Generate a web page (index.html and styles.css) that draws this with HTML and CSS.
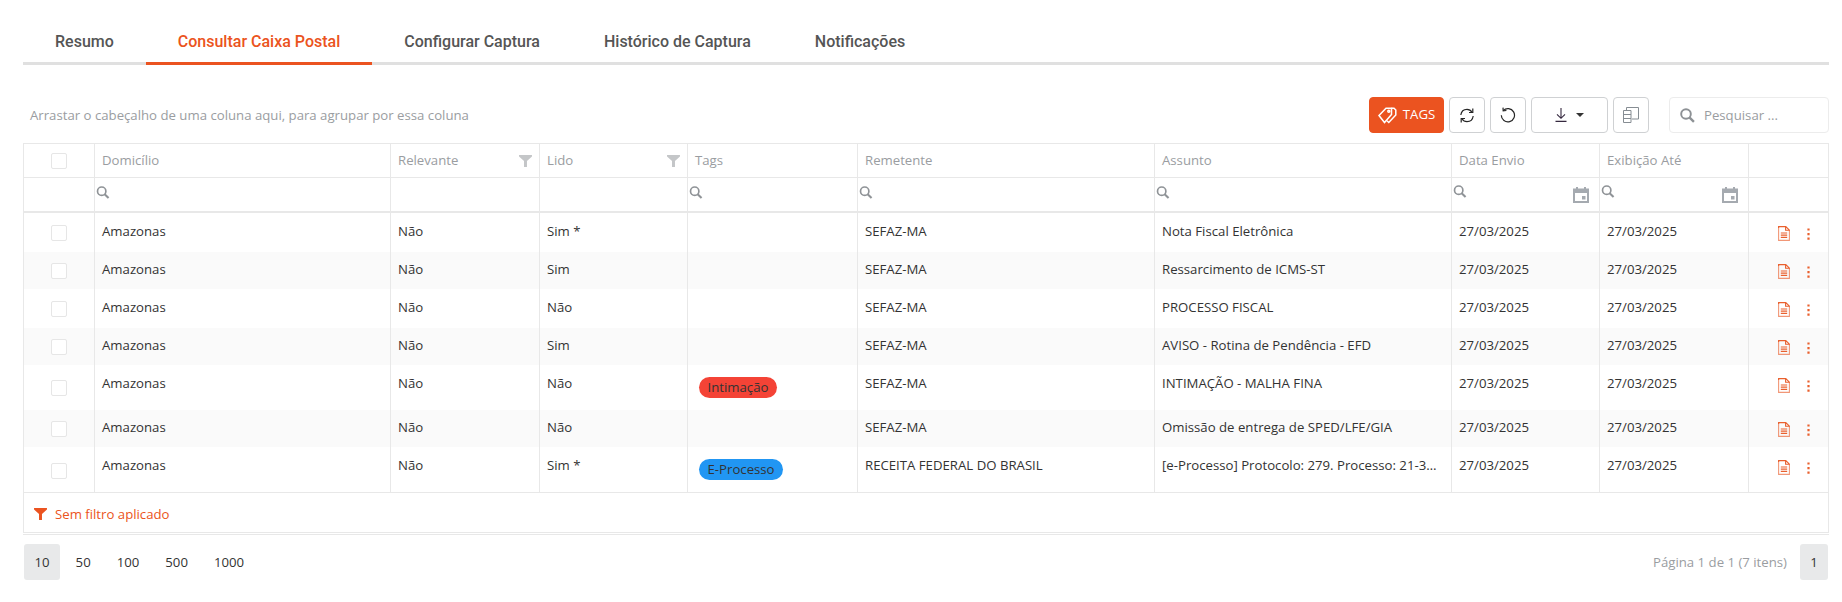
FILE: index.html
```html
<!DOCTYPE html>
<html lang="pt-BR">
<head>
<meta charset="utf-8">
<title>Consultar Caixa Postal</title>
<link rel="stylesheet" href="styles.css">
</head>
<body>
<svg width="0" height="0" class="defs">
  <symbol id="i-search" viewBox="0 0 14 14"><circle cx="5.600" cy="5.600" r="4.500" fill="none" stroke="currentColor" stroke-width="1.800"/><path d="M8.800 8.800l4.200 4.200" stroke="currentColor" stroke-width="2.200" fill="none"/></symbol>
  <symbol id="i-funnel" viewBox="0 0 14 13"><path d="M0 0h14v1.500L8.600 6.600V13H5.400V6.600L0 1.500z" fill="currentColor"/></symbol>
  <symbol id="i-cal" viewBox="0 0 16 16"><path fill-rule="evenodd" d="M3 0h2v1.500h6V0h2v1.500h3V16H0V1.500h3zM2 6v8h12V6zM9 9h3.500v3.500H9z" fill="currentColor"/></symbol>
  <symbol id="i-doc" viewBox="0 0 12 15"><path d="M11.400 4.200v10.200H.6V.6" fill="none" stroke="currentColor" stroke-width="1.100" opacity=".65"/><path d="M.6 2V.6h7.200l3.600 3.600H7.600V.6" fill="none" stroke="currentColor" stroke-width="1.100"/><path d="M2.800 7h6.400M2.800 9.200h6.400M2.800 11.400h6.400" stroke="currentColor" stroke-width="1.200"/></symbol>
  <symbol id="i-dots" viewBox="0 0 3 13"><path d="M.4 .4h2.200v2.200H.4zM.4 5h2.200v2.200H.4zM.4 9.600h2.200v2.200H.4z" fill="currentColor"/></symbol>
</svg>
<main class="page">
  <nav class="tabs">
    <a class="tab">Resumo</a>
    <a class="tab active">Consultar Caixa Postal</a>
    <a class="tab">Configurar Captura</a>
    <a class="tab">Histórico de Captura</a>
    <a class="tab">Notificações</a>
  </nav>

  <div class="toolbar">
    <span class="hint">Arrastar o cabeçalho de uma coluna aqui, para agrupar por essa coluna</span>
    <button class="btn btn-tags">
      <svg width="19" height="17" viewBox="0 0 19 17" fill="none" stroke="currentColor" stroke-width="1.500"><path d="M1 8.500L8 1.200h5.500v6.300L6.500 15.500z"/><path d="M13.500 1.200h2.500l1.800 1.800v5l-7 7.500-1.800-1.800"/><circle cx="10.800" cy="4.200" r="1"/></svg>
      <span class="tags-label">TAGS</span>
    </button>
    <button class="btn btn-icon">
      <svg width="14" height="15" viewBox="0 0 14 15" fill="none" stroke="#262626" stroke-width="1.200"><path d="M.8 7C1.300 3.500 3.800 1.300 7 1.300c2.200 0 3.900 1 5 2.900"/><path d="M12.800.6v3.900H9"/><path d="M13.200 8c-.5 3.500-3 5.700-6.200 5.700-2.200 0-3.900-1-5-2.900"/><path d="M1.200 14.400v-3.900H5"/></svg>
    </button>
    <button class="btn btn-icon">
      <svg width="16" height="16" viewBox="0 0 16 16" fill="none" stroke="#262626" stroke-width="1.200"><path d="M3.200 3.600A6.600 6.600 0 1 1 1.300 8.300"/><path d="M3 .6l.2 3.200 3.200-.3"/></svg>
    </button>
    <button class="btn btn-export">
      <svg width="12" height="14" viewBox="0 0 12 14" fill="none" stroke="#35283f" stroke-width="1.100"><path d="M6 0v10M2 6.300L6 10.300l4-4M.5 13.400h11"/></svg>
      <span class="caret"></span>
    </button>
    <button class="btn btn-icon btn-cols">
      <svg width="16" height="16" viewBox="0 0 16 16" fill="none" stroke="#868d93" stroke-width="1"><path d="M.5 3.500h7.500v12H.5zM.5 7.500h7.500M.5 11.500h7.500"/><path d="M3.500 3.500V.5h12v11.500H9"/></svg>
    </button>
    <label class="search">
      <svg class="search-icon"><use href="#i-search"/></svg>
      <span class="search-ph">Pesquisar ...</span>
    </label>
  </div>

  <section class="grid">
    <table class="data">
      <colgroup>
        <col class="c-check"><col class="c-dom"><col class="c-rel"><col class="c-lido"><col class="c-tags"><col class="c-rem"><col class="c-ass"><col class="c-date"><col class="c-date2"><col class="c-act">
      </colgroup>
      <thead>
        <tr class="head">
          <th class="center"><span class="check"></span></th>
          <th>Domicílio</th>
          <th><div class="th-flex">Relevante<svg class="funnel"><use href="#i-funnel"/></svg></div></th>
          <th><div class="th-flex">Lido<svg class="funnel"><use href="#i-funnel"/></svg></div></th>
          <th>Tags</th>
          <th>Remetente</th>
          <th>Assunto</th>
          <th>Data Envio</th>
          <th>Exibição Até</th>
          <th></th>
        </tr>
        <tr class="filters">
          <td></td>
          <td><svg class="f-search"><use href="#i-search"/></svg></td>
          <td></td>
          <td></td>
          <td><svg class="f-search"><use href="#i-search"/></svg></td>
          <td><svg class="f-search"><use href="#i-search"/></svg></td>
          <td><svg class="f-search"><use href="#i-search"/></svg></td>
          <td class="date-filter"><div class="f-date"><svg class="f-search"><use href="#i-search"/></svg><svg class="f-cal"><use href="#i-cal"/></svg></div></td>
          <td class="date-filter"><div class="f-date"><svg class="f-search"><use href="#i-search"/></svg><svg class="f-cal"><use href="#i-cal"/></svg></div></td>
          <td></td>
        </tr>
      </thead>
      <tbody>
        <tr class="r-b">
          <td class="center"><span class="check"></span></td><td>Amazonas</td><td>Não</td><td>Sim *</td><td></td><td>SEFAZ-MA</td><td>Nota Fiscal Eletrônica</td><td>27/03/2025</td><td>27/03/2025</td>
          <td><div class="acts"><svg class="doc"><use href="#i-doc"/></svg><svg class="dots"><use href="#i-dots"/></svg></div></td>
        </tr>
        <tr class="r-b alt">
          <td class="center"><span class="check"></span></td><td>Amazonas</td><td>Não</td><td>Sim</td><td></td><td>SEFAZ-MA</td><td>Ressarcimento de ICMS-ST</td><td>27/03/2025</td><td>27/03/2025</td>
          <td><div class="acts"><svg class="doc"><use href="#i-doc"/></svg><svg class="dots"><use href="#i-dots"/></svg></div></td>
        </tr>
        <tr class="r-b">
          <td class="center"><span class="check"></span></td><td>Amazonas</td><td>Não</td><td>Não</td><td></td><td>SEFAZ-MA</td><td>PROCESSO FISCAL</td><td>27/03/2025</td><td>27/03/2025</td>
          <td><div class="acts"><svg class="doc"><use href="#i-doc"/></svg><svg class="dots"><use href="#i-dots"/></svg></div></td>
        </tr>
        <tr class="r-b alt">
          <td class="center"><span class="check"></span></td><td>Amazonas</td><td>Não</td><td>Sim</td><td></td><td>SEFAZ-MA</td><td>AVISO - Rotina de Pendência - EFD</td><td>27/03/2025</td><td>27/03/2025</td>
          <td><div class="acts"><svg class="doc"><use href="#i-doc"/></svg><svg class="dots"><use href="#i-dots"/></svg></div></td>
        </tr>
        <tr class="r-t5">
          <td class="center"><span class="check"></span></td><td>Amazonas</td><td>Não</td><td>Não</td><td><span class="pill red">Intimação</span></td><td>SEFAZ-MA</td><td>INTIMAÇÃO - MALHA FINA</td><td>27/03/2025</td><td>27/03/2025</td>
          <td><div class="acts"><svg class="doc"><use href="#i-doc"/></svg><svg class="dots"><use href="#i-dots"/></svg></div></td>
        </tr>
        <tr class="r-b alt">
          <td class="center"><span class="check"></span></td><td>Amazonas</td><td>Não</td><td>Não</td><td></td><td>SEFAZ-MA</td><td>Omissão de entrega de SPED/LFE/GIA</td><td>27/03/2025</td><td>27/03/2025</td>
          <td><div class="acts"><svg class="doc"><use href="#i-doc"/></svg><svg class="dots"><use href="#i-dots"/></svg></div></td>
        </tr>
        <tr class="r-t7">
          <td class="center"><span class="check"></span></td><td>Amazonas</td><td>Não</td><td>Sim *</td><td><span class="pill blue">E-Processo</span></td><td>RECEITA FEDERAL DO BRASIL</td><td>[e-Processo] Protocolo: 279. Processo: 21-3…</td><td>27/03/2025</td><td>27/03/2025</td>
          <td><div class="acts"><svg class="doc"><use href="#i-doc"/></svg><svg class="dots"><use href="#i-dots"/></svg></div></td>
        </tr>
      </tbody>
    </table>
    <div class="filter-bar">
      <svg class="fb-funnel"><use href="#i-funnel"/></svg>
      <span>Sem filtro aplicado</span>
    </div>
  </section>

  <div class="pager">
    <div class="sizes">
      <span class="size current">10</span>
      <span class="size">50</span>
      <span class="size">100</span>
      <span class="size">500</span>
      <span class="size">1000</span>
    </div>
    <div class="pages">
      <span class="info">Página 1 de 1 (7 itens)</span>
      <span class="page-num">1</span>
    </div>
  </div>
</main>
</body>
</html>
```

FILE: styles.css
```css
* { box-sizing: border-box; }
html, body { margin: 0; padding: 0; background: #fff; }
body { font-family: "Open Sans", "Noto Sans", sans-serif; font-size: 13.2px; color: #333; }
.defs { position: absolute; }
.page { padding: 0 13px 0 23px; }

.tabs { display: flex; height: 65px; padding-top: 24px; border-bottom: 3px solid #e0e0e0; font-family: Roboto, sans-serif; font-weight: 500; font-size: 16px; color: #555; }
.tab { display: block; height: 41px; padding: 8px 32px 0; line-height: 20px; white-space: nowrap; }
.tab.active { color: #eb5320; border-bottom: 3px solid #eb5320; }

.toolbar { display: flex; align-items: center; height: 36px; margin-top: 32px; }
.hint { margin: 0 auto 0 7px; color: #9a9da1; }
.btn { display: flex; align-items: center; justify-content: center; height: 36px; padding: 0; margin-left: 5px; background: #fff; border: 1px solid #cfd1d3; border-radius: 4px; font: inherit; color: #333; }
.btn-tags { width: 75px; margin-left: 0; gap: 6px; background: #eb5320; border-color: #eb5320; color: #fff; }
.tags-label { margin-top: -2px; }
.btn-icon { width: 36px; }
.btn-export { width: 77px; gap: 9px; }
.btn-cols { margin-right: 20px; }
.caret { width: 0; height: 0; border: 4px solid transparent; border-top: 4px solid #333; border-bottom: 0; }
.search { display: flex; align-items: center; width: 160px; height: 36px; padding-left: 10px; gap: 9px; border: 1px solid #ececec; border-radius: 4px; color: #9a9da1; }
.search-icon { width: 15px; height: 15px; color: #8d9195; }

.grid { border: 1px solid #e8e8e8; margin-top: 10px; }
.data { width: 100%; table-layout: fixed; border-collapse: separate; border-spacing: 0; }
.data th, .data td { padding: 0 7px; border-left: 1px solid #e8e8e8; vertical-align: top; text-align: left; white-space: nowrap; }
.data th:first-child, .data td:first-child { border-left: 0; }
.c-check { width: 70px; }
.c-dom { width: 296px; }
.c-rel { width: 149px; }
.c-lido { width: 148px; }
.c-tags { width: 170px; }
.c-rem { width: 297px; }
.c-ass { width: 297px; }
.c-date { width: 148px; }
.c-date2 { width: 149px; }
.c-act { width: 80px; }

.data .head th { height: 34px; padding-top: 7px; font-weight: 400; color: #9a9da1; border-bottom: 1px solid #e8e8e8; }
.th-flex { display: flex; justify-content: space-between; align-items: flex-start; }
.funnel { width: 13px; height: 12px; margin-top: 4px; color: #c4c6c8; }
.data .filters td { height: 35px; border-bottom: 2px solid #e8e8e8; padding-left: 1px; padding-top: 8px; }
.data .filters .date-filter { padding-top: 7px; padding-right: 10px; }
.f-search { display: block; width: 14px; height: 13px; color: #8f9397; }
.f-date { display: flex; justify-content: space-between; }
.f-cal { width: 16px; height: 16px; margin-top: 2px; color: #a5aab0; }
.data .head .center { text-align: center; padding: 9px 0 0; }
.check { display: block; width: 16px; height: 16px; margin: 0 auto; background: #fff; border: 1px solid #e6e6e6; border-radius: 2px; }
.data tbody td { padding-top: 9px; line-height: 18px; color: #333; }
.data tbody .center { padding: 2px 0 0; vertical-align: middle; }
.r-b td { height: 38px; }
.r-t5 td { height: 44px; }
.r-t7 td { height: 45px; }
.data .alt td { background: #fafafa; box-shadow: inset 0 1px 0 #fff; }
.pill { display: block; width: fit-content; height: 21px; margin: 3px 0 0 4px; padding: 0 8.500px; border-radius: 11px; line-height: 21px; color: #333; }
.pill.red { background: #f44336; }
.pill.blue { background: #2196f3; }
.acts { display: flex; justify-content: flex-end; align-items: flex-start; gap: 17px; padding: 4px 11px 0 0; }
.doc { width: 12px; height: 15px; color: #e9602e; }
.dots { width: 3px; height: 13px; margin-top: 2px; color: #e9602e; }

.filter-bar { display: flex; align-items: center; height: 40px; padding: 2px 0 0 10px; gap: 8px; color: #eb5320; border-top: 1px solid #e8e8e8; }
.fb-funnel { width: 13px; height: 12px; color: #eb5320; }

.pager { display: flex; justify-content: space-between; align-items: center; margin-top: 1px; padding: 9px 0 0 1px; border-top: 1px solid #e8e8e8; }
.sizes { display: flex; gap: 5px; }
.size { padding: 0 10.500px; line-height: 36px; height: 36px; border-radius: 3px; }
.size.current { background: #e8e9ea; }
.pages { display: flex; align-items: center; gap: 13px; }
.info { color: #9a9da1; }
.page-num { width: 28px; height: 36px; line-height: 36px; text-align: center; background: #e8e9ea; border-radius: 3px; margin-right: 1px; }
```
